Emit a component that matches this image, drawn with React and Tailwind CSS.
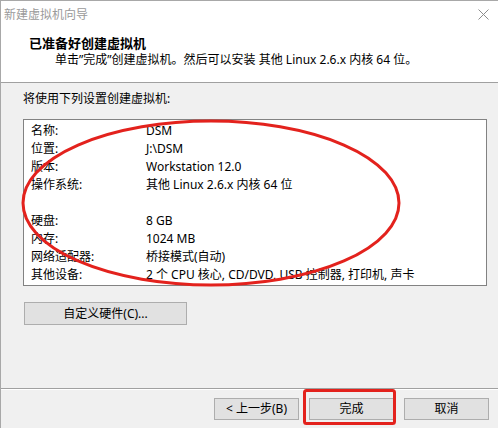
import React from 'react'

const rows = [
  ['名称:', 'DSM'],
  ['位置:', 'J:\\DSM'],
  ['版本:', 'Workstation 12.0'],
  ['操作系统:', '其他 Linux 2.6.x 内核 64 位'],
  ['', ''],
  ['硬盘:', '8 GB'],
  ['内存:', '1024 MB'],
  ['网络适配器:', '桥接模式(自动)'],
  ['其他设备:', '2 个 CPU 核心, CD/DVD, USB 控制器, 打印机, 声卡'],
]

function WinButton({ children, className = '' }) {
  return (
    <button className={`h-[22px] bg-[#e1e1e1] border border-[#adadad] text-[12px] leading-none text-black ${className}`}>
      {children}
    </button>
  )
}

export default function App() {
  return (
    <div className="relative w-[498px] h-[428px] overflow-hidden bg-[#f0f0f0] border-l border-t border-[#a8a8a8] flex flex-col font-['Noto_Sans','Noto_Sans_CJK_SC',sans-serif] text-black">
      {/* title bar */}
      <div className="h-[27px] bg-white flex items-center justify-between pl-[3px] pr-[9px]">
        <span className="text-[12px] text-[#9a9a9a]">新建虚拟机向导</span>
        <svg width="11" height="11" viewBox="0 0 11 11" className="text-[#8c8c8c]">
          <path d="M0.5 0.5 L10.5 10.5 M10.5 0.5 L0.5 10.5" stroke="currentColor" strokeWidth="1" />
        </svg>
      </div>

      {/* header */}
      <div className="h-[55px] bg-white pt-[7px] border-b border-[#a0a0a0]">
        <div className="pl-[28px] text-[13px] leading-[16px] font-bold">已准备好创建虚拟机</div>
        <div className="pl-[54px] text-[12px] leading-[18px]">单击”完成”创建虚拟机。然后可以安装 其他 Linux 2.6.x 内核 64 位。</div>
      </div>

      {/* body */}
      <div className="pt-[7px] pl-[22px]">
        <div className="text-[12px] leading-[18px]">将使用下列设置创建虚拟机:</div>
        <div className="mt-[11px] w-[464px] h-[167px] bg-white border border-[#828282] pt-[2px] pl-[7px]">
          {rows.map(([k, v], i) => (
            <div key={i} className="grid grid-cols-[115px_1fr] h-[18px] text-[12px] leading-[18px] whitespace-nowrap">
              <span>{k}</span>
              <span>{v}</span>
            </div>
          ))}
        </div>
        <WinButton className="mt-[16px] ml-[1px] w-[163px] h-[23px]">自定义硬件(C)...</WinButton>
      </div>

      {/* footer */}
      <div className="mt-auto border-t border-[#a0a0a0] h-[40px]">
        <div className="border-t border-white flex justify-end gap-[10px] pr-[9px] pt-[8px]">
          <WinButton className="w-[85px]">&lt; 上一步(B)</WinButton>
          <WinButton className="w-[85px]">完成</WinButton>
          <WinButton className="w-[85px]">取消</WinButton>
        </div>
      </div>

      {/* annotations */}
      <svg className="absolute left-0 top-0 pointer-events-none" width="498" height="428">
        <ellipse cx="210" cy="202" rx="188" ry="82" fill="none" stroke="#e3221d" strokeWidth="3" />
        <rect x="303.5" y="389.5" width="90" height="33" rx="2" fill="none" stroke="#e3221d" strokeWidth="3" />
      </svg>
    </div>
  )
}
